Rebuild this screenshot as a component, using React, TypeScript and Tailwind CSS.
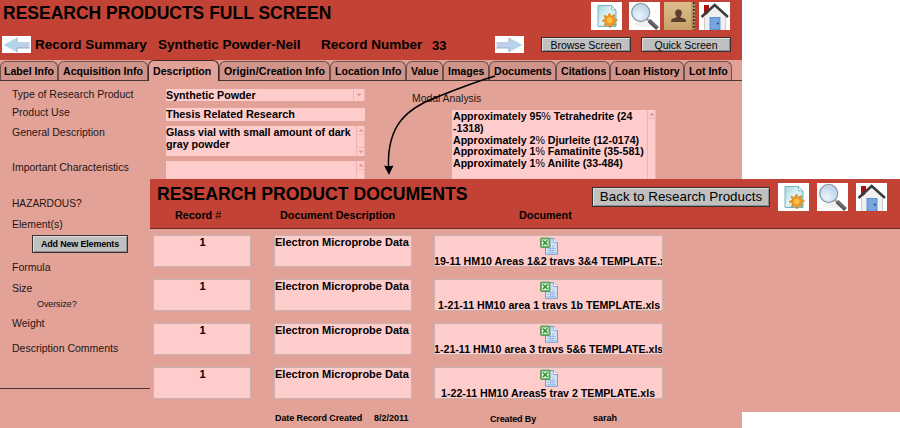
import type { ReactNode } from "react";

function NewDocIcon() {
  return (
    <svg viewBox="0 0 31 28" className="block h-[28px] w-[31px] shrink-0 bg-white">
      <defs>
        <linearGradient id="page" x1="0" y1="0" x2="1" y2="1">
          <stop offset="0" stopColor="#a5d6de" />
          <stop offset=".5" stopColor="#e3f4f6" />
          <stop offset="1" stopColor="#8ccbd5" />
        </linearGradient>
      </defs>
      <path d="M7 3.500h13.500l4.500 4.500v16.500h-18z" fill="url(#page)" stroke="#74b3bf" />
      <path d="M20.500 3.500v4.500h4.500z" fill="#f4fbfc" stroke="#74b3bf" strokeWidth=".8" />
      <path
        d="M18.500 11l1.500 3.500 3.600-1.700-1 3.600 3.900 1.600-3.600 1.700 1.500 3.500-3.600-.8-1.800 3.600-1.800-3.500-3.600 1.500 1.100-3.700-3.700-1.600 3.600-1.600-1.600-3.600 3.700 1z"
        fill="#f39a24"
        stroke="#d97c12"
        strokeWidth=".8"
      />
      <circle cx="18.700" cy="18.300" r="2.800" fill="#ffc04a" />
    </svg>
  );
}

function SearchIcon() {
  return (
    <svg viewBox="0 0 31 28" className="block h-[28px] w-[31px] shrink-0 bg-white">
      <defs>
        <radialGradient id="lens" cx=".4" cy=".7" r=".7">
          <stop offset="0" stopColor="#eef6fe" />
          <stop offset="1" stopColor="#b3cee9" />
        </radialGradient>
      </defs>
      <ellipse cx="15" cy="22" rx="10" ry="3" fill="#f1f1f1" />
      <path d="M18 17l2.500 2.300" stroke="#999" strokeWidth="2" />
      <path d="M20 18.500L28.500 26.500" stroke="#555" strokeWidth="4" />
      <path d="M20.500 18.200L28.500 25.500" stroke="#8c8c8c" strokeWidth="1" />
      <circle cx="11.700" cy="10.500" r="8.900" fill="url(#lens)" stroke="#8e9aa8" strokeWidth="1.500" />
      <circle cx="11.700" cy="10.500" r="7.700" fill="none" stroke="#dbe6f2" strokeWidth=".8" />
    </svg>
  );
}

function ContactIcon() {
  return (
    <svg viewBox="0 0 31 28" className="block h-[28px] w-[31px] shrink-0">
      <defs>
        <linearGradient id="book" x1="0" y1="0" x2="0" y2="1">
          <stop offset="0" stopColor="#dcbd8a" />
          <stop offset="1" stopColor="#c7a16b" />
        </linearGradient>
      </defs>
      <rect width="31" height="28" fill="url(#book)" />
      <path d="M29.700 0v28" stroke="#4a3022" strokeWidth="2.200" strokeDasharray="2.200 1.200" />
      <path d="M27.900 0v28" stroke="#a98352" strokeWidth=".8" />
      <path
        d="M14.500 7.500c2.500 0 3.600 1.700 3.300 4-.2 1.500-.8 2.300-1.500 3 .2 1.200 1.400 1.300 3 1.800 2 .6 2.700 1.500 2.700 3.700H7c0-2.200.7-3.100 2.700-3.700 1.600-.5 2.800-.6 3-1.800-.7-.7-1.300-1.500-1.500-3-.3-2.300.8-4 3.300-4z"
        fill="#5c3d2e"
      />
    </svg>
  );
}

function HomeIcon() {
  return (
    <svg viewBox="0 0 31 28" className="block h-[28px] w-[31px] shrink-0 bg-white">
      <rect x="5" y="3" width="5" height="10" fill="#ad0e12" />
      <path d="M6 14L16 4l10 10v14H6z" fill="#f0f0f1" />
      <path d="M5.500 15v13M26.500 15v13" stroke="#ccc" />
      <path d="M2.500 15L15.700 3 29 15" fill="none" stroke="#3b3b3d" strokeWidth="2.500" />
      <rect x="11" y="15.500" width="10" height="12.500" fill="#76a7e2" stroke="#4c80c4" strokeWidth=".8" />
      <circle cx="18.800" cy="21.500" r="1" fill="#24446f" />
    </svg>
  );
}

function ArrowIcon({ right = false }: { right?: boolean }) {
  return (
    <svg viewBox="0 0 29 17" className={right ? "block h-[17px] w-[29px] shrink-0 -scale-x-100 bg-white" : "block h-[17px] w-[29px] shrink-0 bg-white"}>
      <defs>
        <linearGradient id="arrow" x1="0" y1="0" x2="1" y2="0">
          <stop offset="0" stopColor="#aed8ee" />
          <stop offset="1" stopColor="#c3cde6" />
        </linearGradient>
      </defs>
      <path d="M1.500 9L15 1.500V6h12.500v6H15v4.200z" fill="url(#arrow)" />
      <path d="M15 1.500V6M15 12v4.200M15 12h12.500" fill="none" stroke="#8fa9c2" strokeWidth=".9" />
    </svg>
  );
}

function ExcelIcon() {
  return (
    <svg viewBox="0 0 18 18" className="block h-[18px] w-[18px] shrink-0">
      <path d="M5.500 1.500h8l4 3.800v12h-12z" fill="#cfe1f8" stroke="#6f9bd1" />
      <path d="M13.500 1.500v4h4" fill="#fff" stroke="#6f9bd1" strokeWidth=".8" />
      <path d="M7.500 11.500h8M7.500 13.500h8M7.500 15.500h8M10.500 10v6M13 8v8" stroke="#8fb2de" strokeWidth=".7" />
      <rect x=".5" y="1" width="9.500" height="9.500" rx="1" fill="#6cb366" stroke="#4d9148" strokeWidth=".8" />
      <rect x="2" y="2.500" width="6.500" height="6.500" fill="#dff0dc" />
      <path d="M3 3.500l4.500 4.500M7.500 3.500L3 8" stroke="#2f8a35" strokeWidth="1.500" />
    </svg>
  );
}

function Tri({ up = false }: { up?: boolean }) {
  return (
    <svg viewBox="0 0 6 4" className="block h-[4px] w-[6px]">
      <path d={up ? "M.5 3.500L3 .5l2.500 3z" : "M.5.5h5L3 3.500z"} fill="#dd9a96" />
    </svg>
  );
}

function Scroller({ down = false }: { down?: boolean }) {
  return (
    <div className="flex w-[9px] shrink-0 flex-col justify-between border-x border-[#f0b3b0]">
      <div className="flex h-[9px] items-center justify-center border-b border-[#f0b3b0]">
        <Tri up />
      </div>
      {down && (
        <div className="flex h-[9px] items-center justify-center border-t border-[#f0b3b0]">
          <Tri />
        </div>
      )}
    </div>
  );
}

function Button({ className, children }: { className: string; children: ReactNode }) {
  return (
    <button
      className={
        "flex shrink-0 items-center justify-center border border-[#3b2f2d] bg-[#c0c0c0] whitespace-nowrap shadow-[inset_1px_1px_0_#dedede,inset_-1px_-1px_0_#8e8e8e] " +
        className
      }
    >
      {children}
    </button>
  );
}

const tabs = [
  { name: "Label Info", cls: "w-[58px] pl-[3px]" },
  { name: "Acquisition Info", cls: "w-[90px] pl-[4px]" },
  { name: "Description", cls: "w-[71px] pl-[4px]" },
  { name: "Origin/Creation Info", cls: "w-[111px] pl-[4px] tracking-[0.08px]" },
  { name: "Location Info", cls: "w-[76px] pl-[4px]" },
  { name: "Value", cls: "w-[37px] pl-[4px]" },
  { name: "Images", cls: "w-[46px] pl-[4px]" },
  { name: "Documents", cls: "w-[67px] pl-[4px]" },
  { name: "Citations", cls: "w-[54px] pl-[4px]" },
  { name: "Loan History", cls: "w-[74px] pl-[4px]" },
  { name: "Lot Info", cls: "w-[48px] pl-[4px]" },
];

const labels = [
  { text: "Type of Research Product", cls: "mt-[6px]" },
  { text: "Product Use", cls: "mt-[4px]" },
  { text: "General Description", cls: "mt-[6px]" },
  { text: "Important Characteristics", cls: "mt-[21px]" },
  { text: "HAZARDOUS?", cls: "mt-[23px] text-[10.2px]" },
  { text: "Element(s)", cls: "mt-[6px]" },
];

const lowerLabels = [
  { text: "Formula", cls: "mt-[6px]" },
  { text: "Size", cls: "mt-[7px]" },
  { text: "Oversize?", cls: "mt-[2px] pl-[25px] text-[9px] tracking-[-0.1px]" },
  { text: "Weight", cls: "mt-[5px]" },
  { text: "Description Comments", cls: "mt-[11px]" },
];

const documents = [
  { file: "19-11 HM10 Areas 1&2 travs 3&4 TEMPLATE.xls", cls: "-ml-px" },
  { file: "1-21-11 HM10 area 1 travs 1b TEMPLATE.xls", cls: "pl-[3px]" },
  { file: "1-21-11 HM10 area 3 travs 5&6 TEMPLATE.xls", cls: "-ml-px" },
  { file: "1-22-11 HM10 Areas5 trav 2 TEMPLATE.xls", cls: "pl-[6px]" },
];

function ProductScreen() {
  return (
    <section className="flex h-[428px] w-[742px] flex-col bg-[#e2a298]">
      <header className="flex h-[60px] flex-col bg-[#c24335]">
        <div className="flex h-[32px] pt-[2px]">
          <h1 className="w-[591px] pl-[3px] text-[17.5px] leading-[23px] font-bold">RESEARCH PRODUCTS FULL SCREEN</h1>
          <div className="flex">
            <NewDocIcon />
            <span className="w-[7px]" />
            <SearchIcon />
            <span className="w-[4px]" />
            <ContactIcon />
            <span className="w-[4px]" />
            <HomeIcon />
          </div>
        </div>
        <div className="flex h-[28px] items-center pb-[3px] pl-[2px] text-[13.5px] font-bold whitespace-nowrap">
          <ArrowIcon />
          <span className="ml-[4px] w-[123px] shrink-0 pt-[2px]">Record Summary</span>
          <span className="w-[163px] shrink-0 pt-[2px]">Synthetic Powder-Neil</span>
          <span className="w-[111px] shrink-0 pt-[2px]">Record Number</span>
          <span className="w-[63px] shrink-0 pt-[2px] text-[13px]">33</span>
          <ArrowIcon right />
          <Button className="ml-[17px] h-[15px] w-[90px] pt-[2px] text-[10.5px] font-normal">Browse Screen</Button>
          <Button className="ml-[10px] h-[15px] w-[90px] pt-[2px] text-[10.5px] font-normal">Quick Screen</Button>
        </div>
      </header>
      <nav className="flex h-[21px] items-end border-b border-[#4b3431] text-[10.6px] font-bold whitespace-nowrap">
        {tabs.map((t) => (
          <div
            key={t.name}
            className={
              (t.name === "Description"
                ? "-mb-px flex h-[21px] shrink-0 items-center rounded-t-[6px] border border-b-0 border-[#3d2b29] bg-[#e2a298] pt-[2px] "
                : "flex h-[19px] shrink-0 items-center rounded-t-[6px] border border-b-0 border-[#6d4f4b] bg-[#d0948b] pt-px ") + t.cls
            }
          >
            {t.name}
          </div>
        ))}
      </nav>
      <div className="flex text-[10.5px]">
        <div className="flex h-[307px] w-[166px] flex-col pl-[12px] text-[#241615]">
          {labels.map((l) => (
            <div key={l.text} className={"h-[14px] leading-[14px] whitespace-nowrap " + l.cls}>
              {l.text}
            </div>
          ))}
          <Button className="mt-[4px] ml-[20px] h-[18px] w-[96px] pt-px text-[9px] font-bold tracking-[-0.19px] text-black">Add New Elements</Button>
          {lowerLabels.map((l) => (
            <div key={l.text} className={"h-[14px] leading-[14px] whitespace-nowrap " + l.cls + (l.text === "Formula" ? " mt-[7px]" : "")}>
              {l.text}
            </div>
          ))}
        </div>
        <div className="flex w-[199px] flex-col pt-[8px] text-[10.7px] font-bold whitespace-nowrap">
          <div className="flex h-[12px] justify-between bg-[#ffcccc] leading-[12px]">
            Synthetic Powder
            <div className="flex w-[12px] items-center justify-center border-x border-[#f0b3b0]">
              <Tri />
            </div>
          </div>
          <div className="mt-[7px] h-[13px] bg-[#ffcccc] text-[10.9px] leading-[13px]">Thesis Related Research</div>
          <div className="mt-[5px] flex h-[30px] justify-between bg-[#ffcccc] leading-[12px]">
            <p>
              Glass vial with small amount of dark
              <br />
              gray powder
            </p>
            <Scroller down />
          </div>
          <div className="mt-[5px] flex h-[18px] justify-end bg-[#ffcccc]">
            <Scroller />
          </div>
        </div>
        <div className="ml-[47px] pt-[10px] whitespace-nowrap text-[#241615]">
          <div className="h-[14px] text-[10.4px] leading-[15px]">Modal Analysis</div>
          <div className="mt-[5px] ml-[40px] flex h-[69px] w-[204px] justify-between bg-[#ffcccc] text-[10.6px] leading-[11.8px] font-bold text-black">
            <p className="pt-px pl-px">
              Approximately 95<span className="font-normal">%</span> Tetrahedrite (24
              <br />
              -1318)
              <br />
              Approximately 2<span className="font-normal">%</span> Djurleite (12-0174)
              <br />
              Approximately 1<span className="font-normal">%</span> Famatinite (35-581)
              <br />
              Approximately 1<span className="font-normal">%</span> Anilite (33-484)
            </p>
            <Scroller />
          </div>
        </div>
      </div>
      <div className="h-px bg-[#4b3431]" />
    </section>
  );
}

function DocumentsScreen() {
  return (
    <section className="absolute top-[179px] left-[150px] flex h-[233px] w-[750px] flex-col bg-[#e2a298]">
      <header className="h-[50px] shrink-0 border-b border-[#6b2a22] bg-[#c24335]">
        <div className="flex h-[29px] pt-[4px] pl-[7px] whitespace-nowrap">
          <h2 className="w-[435px] shrink-0 text-[17.7px] leading-[22px] font-bold">RESEARCH PRODUCT DOCUMENTS</h2>
          <Button className="mt-[4px] h-[20px] w-[178px] text-[13.4px]">Back to Research Products</Button>
          <div className="ml-[8px] flex gap-[8px]">
            <NewDocIcon />
            <SearchIcon />
            <HomeIcon />
          </div>
        </div>
        <div className="flex pl-[25px] text-[10.8px] leading-[15px] font-bold whitespace-nowrap">
          <span className="w-[105px]">
            Record <span className="font-normal">#</span>
          </span>
          <span className="w-[239px]">Document Description</span>
          <span>Document</span>
        </div>
      </header>
      <div className="flex flex-col gap-[12px] pt-[6px] pl-[3px] text-[11px] leading-[12px] font-bold whitespace-nowrap">
        {documents.map((d) => (
          <div key={d.file} className="flex h-[32px]">
            <div className="w-[98px] border border-[#c9b3af] bg-[#ffcccc] pl-px text-center">1</div>
            <div className="ml-[23px] w-[138px] border border-[#c9b3af] bg-[#ffcccc]">Electron Microprobe Data</div>
            <div className="ml-[22px] flex w-[229px] flex-col overflow-hidden border border-[#c9b3af] bg-[#ffcccc]">
              <div className="ml-[105px] pt-px">
                <ExcelIcon />
              </div>
              <div className={"h-[11px] text-[10.65px] leading-[13px] " + d.cls}>{d.file}</div>
            </div>
          </div>
        ))}
      </div>
      <footer className="mt-[12px] flex pl-[125px] text-[9px] leading-[14px] font-bold whitespace-nowrap">
        <span className="w-[99px] shrink-0 tracking-[-0.1px]">Date Record Created</span>
        <span className="w-[116px] shrink-0">8/2/2011</span>
        <span className="w-[103px] shrink-0 pt-px tracking-[-0.15px]">Created By</span>
        <span>sarah</span>
      </footer>
    </section>
  );
}

export default function App() {
  return (
    <div className="relative h-[428px] w-[900px] overflow-hidden bg-white font-['Liberation_Sans',Arial,sans-serif] text-black">
      <ProductScreen />
      <DocumentsScreen />
      <svg viewBox="0 0 120 110" className="pointer-events-none absolute top-[70px] left-[380px] h-[110px] w-[120px]">
        <path d="M115 6C92 13 72 21 57 27 28 38 7 54 8.500 97" fill="none" stroke="#000" strokeWidth="1.500" />
        <path d="M4 95.500q4.500 1.500 9.500 0L9 105z" fill="#000" />
      </svg>
    </div>
  );
}
